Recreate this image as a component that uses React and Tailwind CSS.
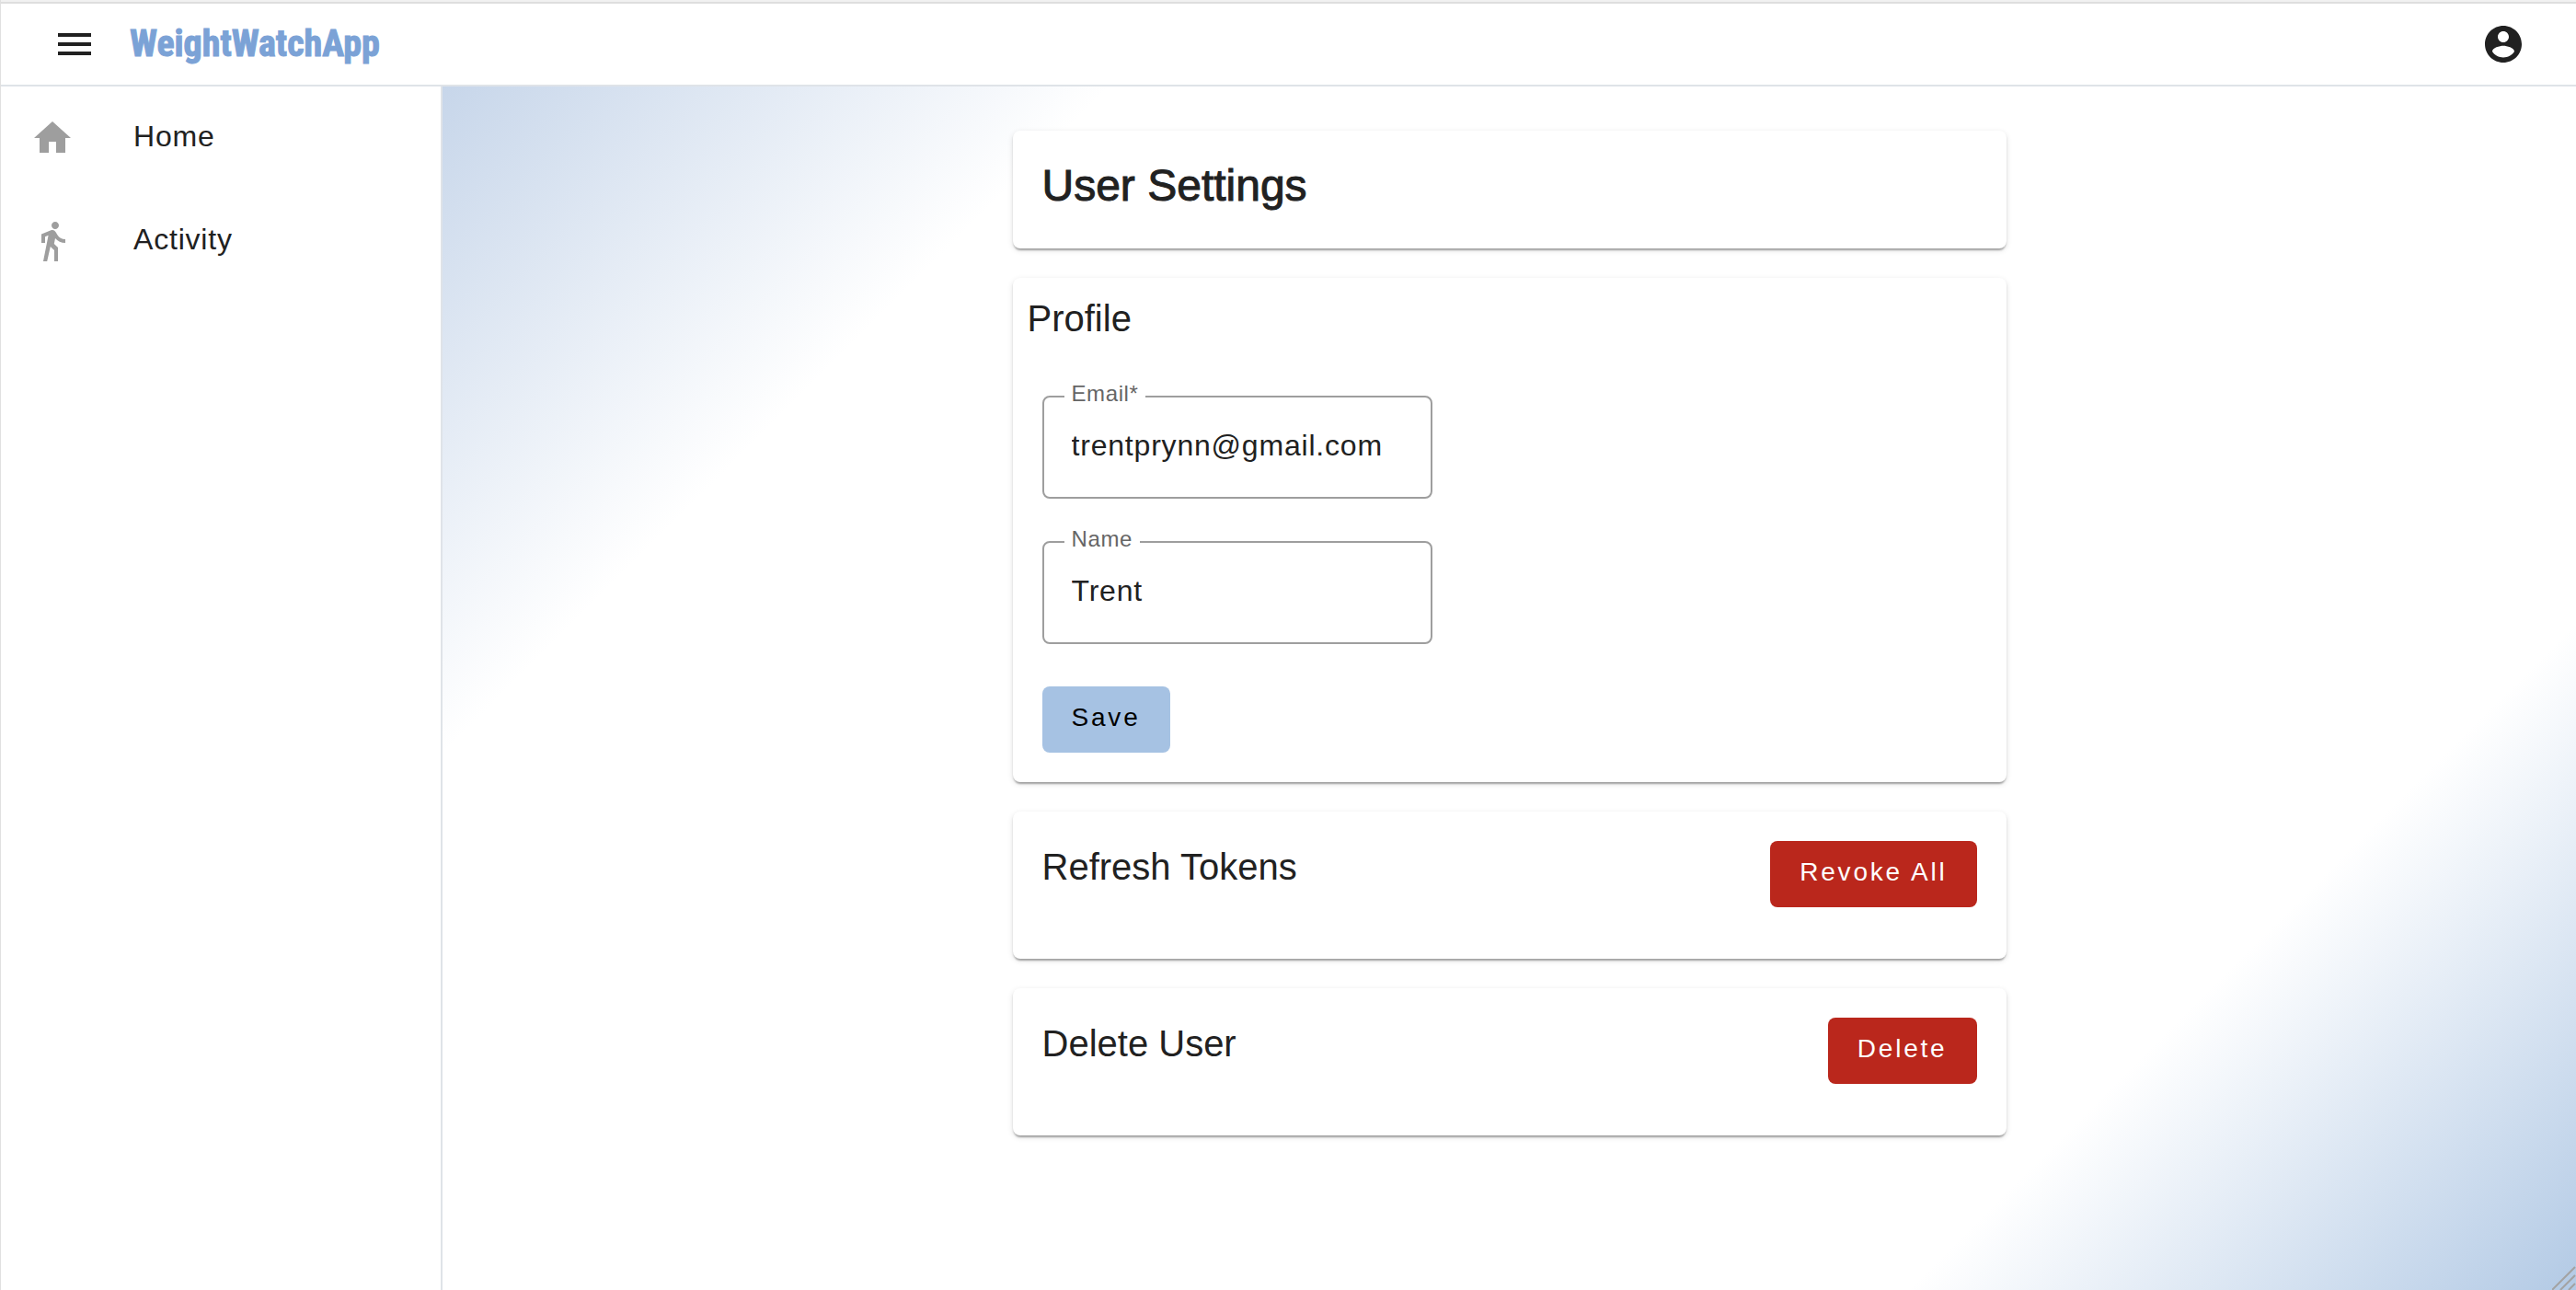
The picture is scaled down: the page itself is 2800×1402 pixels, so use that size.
import React from "react";

function Icon({ path, className = "" }) {
  return (
    <svg viewBox="0 0 24 24" fill="currentColor" aria-hidden="true" className={`size-12 shrink-0 ${className}`}>
      <path d={path} />
    </svg>
  );
}

const ICONS = {
  menu: "M3 18h18v-2H3v2zm0-5h18v-2H3v2zm0-7v2h18V6H3z",
  account:
    "M12 2C6.48 2 2 6.48 2 12s4.48 10 10 10 10-4.48 10-10S17.52 2 12 2zm0 3c1.66 0 3 1.34 3 3s-1.34 3-3 3-3-1.34-3-3 1.34-3 3-3zm0 14.2c-2.5 0-4.71-1.28-6-3.22.03-1.99 4-3.08 6-3.08 1.99 0 5.97 1.09 6 3.08-1.29 1.94-3.5 3.22-6 3.22z",
  home: "M10 20v-6h4v6h5v-8h3L12 3 2 12h3v8z",
  walk: "M13.5 5.5c1.1 0 2-.9 2-2s-.9-2-2-2-2 .9-2 2 .9 2 2 2zM9.8 8.9L7 23h2.1l1.8-8 2.1 2v6h2v-7.500l-2.100-2 .6-3C14.800 12 16.800 13 19 13v-2c-1.900 0-3.500-1-4.300-2.400l-1-1.600c-.4-.6-1-1-1.700-1-.3 0-.5.1-.8.1L6 8.300V13h2V9.600l1.800-.7",
};

const NAV = [
  { label: "Home", icon: ICONS.home },
  { label: "Activity", icon: ICONS.walk },
];

function Card({ className = "", children }) {
  return (
    <section
      className={`rounded-lg bg-white shadow-[0_4px_2px_-2px_rgba(0,0,0,0.2),0_2px_2px_0_rgba(0,0,0,0.14),0_2px_6px_0_rgba(0,0,0,0.12)] ${className}`}
    >
      {children}
    </section>
  );
}

function Field({ id, label, type, value, required }) {
  return (
    <div className="relative w-[424px] max-w-full">
      <input
        id={id}
        type={type}
        defaultValue={value}
        required={required}
        className="block h-28 w-full rounded-lg border-2 border-[#9e9e9e] bg-white px-[30px] pb-1 text-[32px] tracking-wide text-[#212121] outline-none"
      />
      <label
        htmlFor={id}
        className="absolute -top-4 left-6 bg-white px-2 text-[24px] leading-7 tracking-wide text-[#666666]"
      >
        {label}
        {required && "*"}
      </label>
    </div>
  );
}

function Button({ className, children }) {
  return (
    <button type="button" className={`h-[72px] shrink-0 rounded-lg px-8 pb-1 text-[28px] tracking-widest ${className}`}>
      {children}
    </button>
  );
}

function ActionCard({ title, action }) {
  return (
    <Card className="flex min-h-40 items-start justify-between p-8">
      <h2 className="text-[40px] leading-14">{title}</h2>
      <Button className="bg-[#ba271c] text-white">{action}</Button>
    </Card>
  );
}

export default function App() {
  return (
    <div className="relative flex min-h-screen flex-col border-l border-[#e0e0e0] bg-white font-['Liberation_Sans',Arial,sans-serif] text-[#212121]">
      <div className="h-1 border-b-2 border-[#dedede] bg-[#f1f1f1]" />
      <header className="flex h-[90px] items-center border-b-2 border-[#dfe3e8] pr-[55px] pl-14">
        <button type="button" aria-label="Toggle menu">
          <Icon path={ICONS.menu} />
        </button>
        <a
          href="#home"
          className="ml-9 font-['Roboto_Condensed','DejaVu_Sans_Condensed',sans-serif] text-[40px] leading-none font-bold text-[#7ba2d6] [-webkit-text-stroke:1px_#7ba2d6]"
        >
          WeightWatchApp
        </a>
        <button type="button" aria-label="Account" className="ml-auto">
          <Icon path={ICONS.account} />
        </button>
      </header>

      <div className="flex grow">
        <nav className="w-[480px] shrink-0 border-r-2 border-[#dfe3e8]">
          {NAV.map(({ label, icon }) => (
            <a key={label} href={`#${label.toLowerCase()}`} className="flex h-28 items-center gap-16 px-8">
              <Icon path={icon} className="text-[#9e9e9e]" />
              <span className="pb-1 text-[32px] tracking-wide">{label}</span>
            </a>
          ))}
        </nav>

        <main className="grow bg-[linear-gradient(135deg,#c7d6ea_0%,#ffffff_20%,#ffffff_80%,#b3cae5_100%)] px-8 py-12">
          <div className="mx-auto flex max-w-[1080px] flex-col gap-8">
            <Card className="px-8 pt-8 pb-10">
              <h1 className="text-[48px] leading-14 [-webkit-text-stroke:1px_#212121]">User Settings</h1>
            </Card>

            <Card className="px-4 pt-4 pb-8">
              <h2 className="text-[40px] leading-14">Profile</h2>
              <form className="flex flex-col items-start gap-[46px] px-4 pt-14">
                <Field id="email" label="Email" type="email" value="trentprynn@gmail.com" required />
                <Field id="name" label="Name" type="text" value="Trent" />
                <Button className="bg-[#a6c2e3] text-black">Save</Button>
              </form>
            </Card>

            <ActionCard title="Refresh Tokens" action="Revoke All" />
            <ActionCard title="Delete User" action="Delete" />
          </div>
        </main>
      </div>

      <svg viewBox="0 0 26 26" aria-hidden="true" className="absolute right-0 bottom-0 size-[26px]">
        <path d="M0 26 25 1M9 26 25 10M18 26 25 19" fill="none" stroke="#a3a3a3" strokeWidth="2" />
      </svg>
    </div>
  );
}
